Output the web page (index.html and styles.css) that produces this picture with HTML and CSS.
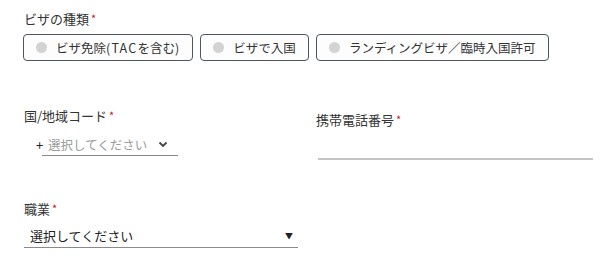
FILE: index.html
```html
<!DOCTYPE html>
<html lang="ja">
<head>
    <meta charset="UTF-8">
    <meta name="viewport" content="width=device-width, initial-scale=1.0">
    <title>申請フォーム</title>
    <link rel="stylesheet" href="styles.css">
</head>
<body>
    <div class="form">
        <div class="field visa">
            <div class="label">ビザの種類<span class="req">*</span></div>
            <div class="options">
                <label class="option"><span class="radio"></span>ビザ免除<span class="latin">(TAC</span>を含む<span class="latin">)</span></label>
                <label class="option"><span class="radio"></span>ビザで入国</label>
                <label class="option"><span class="radio"></span>ランディングビザ／臨時入国許可</label>
            </div>
        </div>

        <div class="row">
            <div class="field country">
                <div class="label">国/地域コード<span class="req">*</span></div>
                <div class="code-select">
                    <span class="plus">+</span>
                    <div class="code-box">
                        <span class="placeholder">選択してください</span>
                        <svg class="chevron" width="10" height="7" viewBox="0 0 10 7">
                            <path d="M1.5 1.5 L5 5 L8.5 1.5" fill="none" stroke="#444" stroke-width="1.8"/>
                        </svg>
                    </div>
                </div>
            </div>
            <div class="field phone">
                <div class="label">携帯電話番号<span class="req">*</span></div>
                <div class="phone-input"></div>
            </div>
        </div>

        <div class="field job">
            <div class="label">職業<span class="req">*</span></div>
            <div class="job-select">
                <span>選択してください</span>
                <span class="caret">▼</span>
            </div>
        </div>
    </div>
</body>
</html>
```

FILE: styles.css
```css
body {
    margin: 0;
    padding: 10px 20px 0 24px;
    font-family: "Noto Sans CJK JP", "Noto Sans", sans-serif;
    color: #333;
    background: #fff;
}
.label {
    font-size: 13px;
    line-height: 16px;
}
.req {
    color: #c8102e;
    font-size: 11px;
    margin-left: 2px;
    vertical-align: 1px;
}
.options {
    display: flex;
    gap: 7px;
    margin-top: 7px;
    margin-left: -1px;
}
.option {
    display: flex;
    align-items: center;
    height: 27px;
    box-sizing: border-box;
    border: 1px solid #4d5660;
    border-radius: 4px;
    padding: 0 12px;
    font-size: 12.5px;
    background: #fdfdfd;
    white-space: pre;
}
.latin {
    letter-spacing: 1.2px;
}
.radio {
    width: 11px;
    height: 11px;
    border-radius: 50%;
    background: #d3d3d3;
    margin-right: 9px;
}
.row {
    display: grid;
    grid-template-columns: 274px 275px;
    column-gap: 20px;
    margin-top: 46px;
}
.code-select {
    display: flex;
    align-items: center;
    margin-top: 9px;
    margin-left: 12px;
}
.plus {
    font-size: 13px;
    width: 6px;
    color: #222;
}
.code-box {
    display: flex;
    align-items: center;
    justify-content: space-between;
    width: 120px;
    height: 22px;
    border-bottom: 1px solid #8a8a8a;
    padding: 0 10px 0 6px;
}
.placeholder {
    font-size: 12.5px;
    color: #9a9a9a;
}
.phone {
    padding-top: 4px;
}
.phone .label {
    margin-left: -2px;
}
.phone-input {
    height: 30px;
    border-bottom: 2px solid #c4c4c4;
}
.job {
    margin-top: 40px;
}
.job-select {
    display: flex;
    align-items: center;
    justify-content: space-between;
    width: 274px;
    height: 24px;
    margin-top: 7px;
    padding: 0 5px 0 6px;
    box-sizing: border-box;
    border-bottom: 1px solid #8a8a8a;
    font-size: 13px;
    color: #222;
}
.caret {
    font-size: 8px;
    color: #222;
}
```
